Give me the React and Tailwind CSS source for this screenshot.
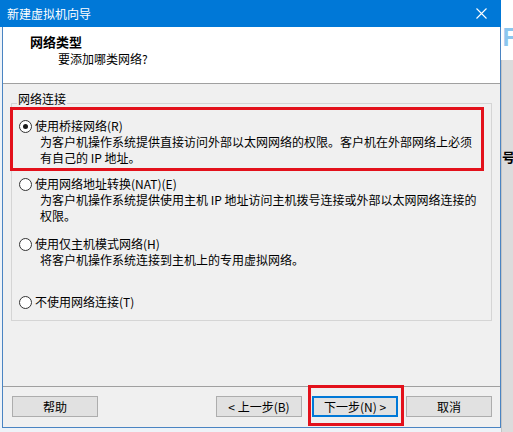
import React from 'react';

const Radio = ({ checked }) => (
    <span className="flex h-[13px] w-[13px] shrink-0 items-center justify-center rounded-full border border-[#333333] bg-white">
        {checked && <span className="h-[5px] w-[5px] rounded-full bg-[#1a1a1a]" />}
    </span>
);

const Option = ({ checked, label, lines = [] }) => (
    <div>
        <div className="flex items-center gap-[3px] leading-[16px]">
            <Radio checked={checked} />
            <span>{label}</span>
        </div>
        {lines.map(line => (
            <div key={line} className="pl-[21px] leading-[16px] whitespace-nowrap">{line}</div>
        ))}
    </div>
);

const Button = ({ children, primary }) => (
    <button
        className={
            primary
                ? 'h-[21px] w-[86px] border-2 border-[#0078d7] bg-[#e1e1e1] text-[12px] leading-[16px] text-black'
                : 'h-[21px] w-[86px] border border-[#adadad] bg-[#e1e1e1] text-[12px] leading-[16px] text-black'
        }
    >
        {children}
    </button>
);

const App = () => {
    return (
        <div className="flex h-[432px] w-[513px] overflow-hidden bg-[#eef3f8] font-['Noto_Sans_CJK_SC','Microsoft_YaHei',sans-serif] text-[12px] text-black">
            {/* wizard window */}
            <div className="flex h-[428px] w-[501px] shrink-0 flex-col">
                <div className="flex h-[27px] shrink-0 items-center justify-between bg-[#0078d7] pl-[7px] pr-[10px] text-white">
                    <span className="leading-[16px]">新建虚拟机向导</span>
                    <svg width="11" height="11" viewBox="0 0 11 11" className="mr-[4px]">
                        <path d="M0.5 0.5 L10.5 10.5 M10.5 0.5 L0.5 10.5" stroke="white" strokeWidth="1.1" />
                    </svg>
                </div>
                <div className="ml-[2px] flex flex-1 flex-col border-x border-b border-[#4a84c2] bg-[#f0f0f0]">
                    <div className="h-[57px] shrink-0 border-b border-[#a0a0a0] bg-white pt-[7px]">
                        <div className="pl-[27px] text-[13px] font-bold leading-[16px]">网络类型</div>
                        <div className="pl-[55px] leading-[18px]">要添加哪类网络?</div>
                    </div>

                    <div className="relative mx-[8px] mt-[19px] border border-[#d5d5d5] pb-[10px] pl-[7px]">
                        <span className="absolute -top-[13px] left-[5px] bg-[#f0f0f0] px-[1px] leading-[16px]">网络连接</span>

                        <div className="-ml-[9px] mt-[3px] w-[474px] border-[3px] border-[#e3111b] pb-[2px] pl-[6px] pt-[8px]">
                            <Option
                                checked
                                label="使用桥接网络(R)"
                                lines={['为客户机操作系统提供直接访问外部以太网网络的权限。客户机在外部网络上必须', '有自己的 IP 地址。']}
                            />
                        </div>

                        <div className="mt-[5px]">
                            <Option
                                label="使用网络地址转换(NAT)(E)"
                                lines={['为客户机操作系统提供使用主机 IP 地址访问主机拨号连接或外部以太网网络连接的', '权限。']}
                            />
                        </div>

                        <div className="mt-[12px]">
                            <Option label="使用仅主机模式网络(H)" lines={['将客户机操作系统连接到主机上的专用虚拟网络。']} />
                        </div>

                        <div className="mt-[26px]">
                            <Option label="不使用网络连接(T)" />
                        </div>
                    </div>

                    <div className="mt-[65px] h-px shrink-0 bg-[#a0a0a0]" />

                    <div className="mt-[9px] flex items-center pl-[9px] pr-[8px]">
                        <Button>帮助</Button>
                        <div className="flex-1" />
                        <Button>&lt; 上一步(B)</Button>
                        <div className="relative ml-[10px]">
                            <Button primary>下一步(N) &gt;</Button>
                            <div className="pointer-events-none absolute -left-[4px] -top-[11px] h-[41px] w-[96px] border-[3px] border-[#e3111b]" />
                        </div>
                        <div className="ml-[8px]">
                            <Button>取消</Button>
                        </div>
                    </div>
                </div>
            </div>

            {/* desktop behind the window */}
            <div className="flex w-[12px] shrink-0 flex-col">
                <div className="h-[60px] shrink-0 bg-white pl-[1px] pt-[22px] text-[24px] font-bold leading-[28px] text-[#8cc6ee]">F</div>
                <div className="flex-1 border-l border-[#c4c4c4] bg-[#dcdcdc] pt-[89px] text-[13px] font-bold leading-[16px]">号</div>
            </div>
        </div>
    );
};

export default App;
